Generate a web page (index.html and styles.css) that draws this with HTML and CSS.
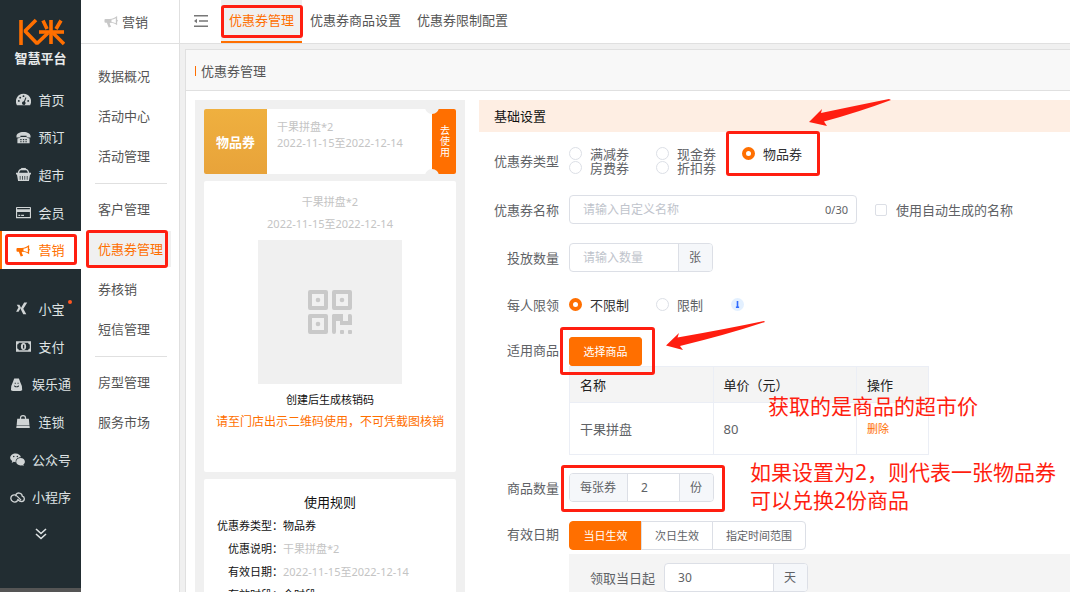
FILE: index.html
```html
<!DOCTYPE html>
<html lang="zh-CN">
<head>
<meta charset="utf-8">
<meta name="viewport" content="width=device-width, initial-scale=1">
<title>优惠券管理</title>
<link rel="stylesheet" href="styles.css">
</head>
<body>
<div class="app">
  <aside class="sidebar">
    <div class="brand">
      <svg class="brand-mark" viewBox="0 0 48 28" aria-hidden="true">
        <g fill="none" stroke="#ff6f00" stroke-width="3.600" stroke-linejoin="bevel">
          <path d="M4 2V27"/>
          <path d="M19 2L8 13L20 25.500L31 15"/>
          <path d="M22 14H47"/>
          <path d="M34 2V26"/>
          <path d="M26 2.500L30 11M44 2.500L39 11"/>
          <path d="M36 15L47 26"/>
        </g>
      </svg>
      <span class="brand-name">智慧平台</span>
    </div>
    <nav class="main-nav">
      <ul class="nav-group">
        <li><a class="nav-item" href="#"><svg class="icon" viewBox="0 0 16 16"><path fill="currentColor" fill-rule="evenodd" d="M8 2a8 8 0 0 0-7 12h14A8 8 0 0 0 8 2zM3 8.500a1 1 0 1 1 0 2 1 1 0 0 1 0-2zM4.500 5a1 1 0 1 1 0 2 1 1 0 0 1 0-2zM8 3.400a1 1 0 1 1 0 2 1 1 0 0 1 0-2zM13 8.500a1 1 0 1 1 0 2 1 1 0 0 1 0-2zM10.200 5.700l.9.400-1.600 4.300a1.900 1.900 0 1 1-1.100-.4z"/></svg>首页</a></li>
        <li><a class="nav-item" href="#"><svg class="icon" viewBox="0 0 16 16"><path fill="currentColor" fill-rule="evenodd" d="M8 2C3.500 2 .5 4 .5 6.500V8h4.200V6.200h6.600V8h4.200V6.500C15.500 4 12.500 2 8 2zM4.500 8.200L1.500 9v5h13V9l-3-.8V7.400h-7zM4.500 9.500h1.500V11H4.500zM7.300 9.500h1.500V11H7.300zM10 9.500h1.500V11H10zM4.500 12h1.500v1H4.500zM7.300 12h1.500v1H7.300zM10 12h1.500v1H10z"/></svg>预订</a></li>
        <li><a class="nav-item" href="#"><svg class="icon" viewBox="0 0 16 16"><path fill="none" stroke="currentColor" stroke-width="1.500" d="M2.500 7Q3 2.500 6 2.500h4Q13 2.500 13.500 7"/><path fill="currentColor" d="M5.500 1h5v2.500h-5z"/><path fill="currentColor" fill-rule="evenodd" d="M0 6h16v2h-1l-1.200 7H2.200L1 8H0zM4 9.500v4h.8v-4zM6.500 9.500v4h.8v-4zM9 9.500v4h.8v-4zM11.500 9.500v4h.8v-4z"/></svg>超市</a></li>
        <li><a class="nav-item" href="#"><svg class="icon" viewBox="0 0 16 16"><path fill="currentColor" fill-rule="evenodd" d="M0 3q0-1 1-1h14q1 0 1 1v11H0zM1.200 3.200v1.300h13.600V3.200zM1.200 7.500v5.300h13.600V7.500zM2.500 10.500h2v1.200h-2zM5.500 10.500h3v1.200h-3z"/></svg>会员</a></li>
        <li><a class="nav-item active" href="#"><svg class="icon" viewBox="0 0 16 16"><path fill="currentColor" fill-rule="evenodd" d="M14 2v10c-2-1.600-4-2.500-7-2.700l-1 .8 1.600 3.600-2.600.6L3 9.300H1.500Q.5 9.300.5 8V6.500Q.5 5.300 1.500 5.300H6C9.500 5 12 3.700 14 2zM12.600 4.500C11 5.500 9.500 6 8 6.200v2.200c1.700.2 3.200.7 4.600 1.500z"/><path fill="currentColor" d="M14 6q2 1 0 2z"/></svg>营销</a></li>
      </ul>
      <ul class="nav-group">
        <li><a class="nav-item" href="#"><svg class="icon" viewBox="0 0 16 16"><path fill="currentColor" d="M.8 4h2.800l1.700 3-2.600 4.500H.1L2.600 7zM8.700 1.500H12L7.800 8.200l3.200 6H7.700L4.800 8.200z"/></svg><span class="with-dot">小宝</span></a></li>
        <li><a class="nav-item" href="#"><svg class="icon" viewBox="0 0 16 16"><path fill="currentColor" fill-rule="evenodd" d="M0 2.500h16v11H0zM3 4Q3 5.500 1.300 5.800v4.400Q3 10.500 3 12h10q0-1.500 1.700-1.800V5.800Q13 5.500 13 4z"/><path fill="currentColor" fill-rule="evenodd" d="M8 4.300c2 0 2.800 1.700 2.800 3.700S10 11.700 8 11.700 5.200 10 5.200 8 6 4.300 8 4.300zM7.400 6v4h1.400V6z"/></svg>支付</a></li>
        <li><a class="nav-item" href="#"><svg class="icon" viewBox="0 0 16 16"><path fill="currentColor" fill-rule="evenodd" d="M4.500 1.500h5l1.500 4q2 3 2 8.500L11 15H3L1 14q0-5.500 2-8.500zM5 6v1.300h1.200V6zM8 6v1.300h1.200V6zM4.500 8.800q2.500 2.400 5 0v1.200q-2.500 2-5 0z"/></svg>娱乐通</a></li>
        <li><a class="nav-item" href="#"><svg class="icon" viewBox="0 0 16 16"><path fill="none" stroke="currentColor" stroke-width="1.300" d="M4.800 7V4.500Q4.800 1.700 7.500 1.700T10.200 4.500V7"/><path fill="currentColor" d="M1.300 5h12.400l.6 6.800H.7zM.6 12.300h13.800L14.700 15H.3z"/></svg>连锁</a></li>
        <li><a class="nav-item" href="#"><svg class="icon" viewBox="0 0 16 16"><path fill="currentColor" fill-rule="evenodd" d="M6 1.500c3 0 5.300 1.800 5.600 4.200-3.600 0-6 2.300-5.500 5.200L4 10.500 1.800 11.700l.6-2C1 8.800.2 7.500.2 6.200.2 3.500 2.800 1.500 6 1.500zM4 4a.8.8 0 1 0 0 1.600A.8.800 0 0 0 4 4zM7.800 4a.8.800 0 1 0 0 1.600.8.800 0 0 0 0-1.600z"/><path fill="currentColor" fill-rule="evenodd" d="M11.300 6.500c2.600 0 4.600 1.700 4.600 3.900 0 1.200-.7 2.300-1.700 3l.4 1.600-1.700-.9c-3.500.8-6.300-1-6.300-3.700 0-2.200 2.100-3.900 4.700-3.900z"/></svg>公众号</a></li>
        <li><a class="nav-item" href="#"><svg class="icon" viewBox="0 0 16 16"><path fill="none" stroke="currentColor" stroke-width="1.400" stroke-linecap="round" d="M8 11.500C6.500 13 4.500 13.200 3 12.300.6 11 .3 8 2 6.200 3.700 4.600 6.200 5 7.500 6.500L11.500 10.500M6 6C6.500 3.500 8.500 3 10 3.300c2 .4 3 1.800 3 3.200 1.400.3 2.300 1.400 2.300 2.800 0 1.800-1.300 3-3 3-1.800 0-2.800-.9-4-2.200"/></svg>小程序</a></li>
      </ul>
    </nav>
    <button class="more" type="button" aria-label="更多"><svg viewBox="0 0 12 12"><path fill="none" stroke="#dfe3e4" stroke-width="1.600" d="M1 1l5 4.500L11 1M1 6l5 4.500L11 6"/></svg></button>
    <div class="sidebar-foot"></div>
  </aside>

  <aside class="submenu">
    <header class="submenu-head"><svg class="icon" viewBox="0 0 16 16"><path fill="#c8c8c8" fill-rule="evenodd" d="M14 2v10c-2-1.600-4-2.500-7-2.700l-1 .8 1.600 3.600-2.600.6L3 9.300H1.500Q.5 9.300.5 8V6.500Q.5 5.300 1.500 5.300H6C9.500 5 12 3.700 14 2zM12.600 4.500C11 5.500 9.500 6 8 6.200v2.200c1.700.2 3.200.7 4.600 1.500z"/><path fill="#c8c8c8" d="M14 6q2 1 0 2z"/></svg>营销</header>
    <nav class="submenu-nav">
      <ul><li><a href="#">数据概况</a></li><li><a href="#">活动中心</a></li><li><a href="#">活动管理</a></li></ul>
      <ul><li><a href="#">客户管理</a></li><li><a class="active" href="#">优惠券管理</a></li><li><a href="#">券核销</a></li><li><a href="#">短信管理</a></li></ul>
      <ul><li><a href="#">房型管理</a></li><li><a href="#">服务市场</a></li></ul>
    </nav>
  </aside>

  <main class="main">
    <header class="topbar">
      <button class="fold" type="button" aria-label="收起菜单"><svg viewBox="0 0 14 14"><path fill="none" stroke="#777" stroke-width="1.400" d="M0 1.700h14M5 7h9M0 12.300h14"/><path fill="#777" d="M0 7l3-2.300v4.600z"/></svg></button>
      <nav class="tabs">
        <a class="tab active" href="#">优惠券管理</a>
        <a class="tab" href="#">优惠券商品设置</a>
        <a class="tab" href="#">优惠券限制配置</a>
      </nav>
    </header>

    <section class="panel">
      <h1 class="panel-title">优惠券管理</h1>
      <div class="panel-body">
        <div class="preview">
          <div class="coupon">
            <div class="coupon-kind">物品券</div>
            <div class="coupon-info">干果拼盘*2<br>2022-11-15至2022-12-14</div>
            <div class="coupon-use">去使用</div>
          </div>
          <div class="card code-card">
            <p class="muted">干果拼盘*2</p>
            <p class="muted">2022-11-15至2022-12-14</p>
            <div class="qr">
              <svg viewBox="0 0 44 44" aria-hidden="true">
                <g fill="none" stroke="#c9c9c9" stroke-width="4" stroke-linejoin="round">
                  <rect x="2" y="2" width="16" height="16"/><rect x="26" y="2" width="16" height="16"/><rect x="2" y="26" width="16" height="16"/>
                </g>
                <g fill="#c9c9c9">
                  <circle cx="10" cy="10" r="2.300"/><circle cx="34" cy="10" r="2.300"/><circle cx="10" cy="34" r="2.300"/>
                  <path d="M25 24h10v7h5v-6q0-1 2-1t2 2v9H32v-4h-4v11q0 2-2 2t-2-2V25z"/>
                  <rect x="32" y="40" width="4" height="4" rx="1"/><rect x="40" y="40" width="4" height="4" rx="1"/>
                </g>
              </svg>
            </div>
            <p class="caption">创建后生成核销码</p>
            <p class="warning">请至门店出示二维码使用，不可凭截图核销</p>
          </div>
          <div class="card rules-card">
            <h2>使用规则</h2>
            <dl>
              <div><dt>优惠券类型：</dt><dd class="dark">物品券</dd></div>
              <div><dt>优惠说明：</dt><dd>干果拼盘*2</dd></div>
              <div><dt>有效日期：</dt><dd>2022-11-15至2022-12-14</dd></div>
              <div><dt>有效时段：</dt><dd class="dark">全时段</dd></div>
            </dl>
          </div>
        </div>

        <form class="form">
          <h2 class="form-title">基础设置</h2>
          <div class="row" role="radiogroup" aria-labelledby="l-type">
            <span class="label" id="l-type">优惠券类型</span>
            <div class="radio-grid">
              <label><input type="radio" name="type">满减券</label>
              <label><input type="radio" name="type">现金券</label>
              <label class="selected"><input type="radio" name="type" checked>物品券</label>
              <label><input type="radio" name="type">房费券</label>
              <label><input type="radio" name="type">折扣券</label>
            </div>
          </div>
          <div class="row">
            <label class="label" for="name">优惠券名称</label>
            <div class="control">
              <div class="field name-field"><input id="name" type="text" placeholder="请输入自定义名称"><span class="count">0/30</span></div>
              <label class="check"><input type="checkbox">使用自动生成的名称</label>
            </div>
          </div>
          <div class="row">
            <label class="label" for="total">投放数量</label>
            <div class="control"><div class="field"><input class="w-total" id="total" type="text" placeholder="请输入数量"><span class="addon after">张</span></div></div>
          </div>
          <div class="row limit-row" role="radiogroup" aria-labelledby="l-limit">
            <span class="label" id="l-limit">每人限领</span>
            <div class="radio-grid">
              <label class="selected"><input type="radio" name="limit" checked>不限制</label>
              <label><input type="radio" name="limit">限制</label>
              <svg class="info" viewBox="0 0 13 13" aria-hidden="true"><circle cx="6.500" cy="6.500" r="6.500" fill="#e3f0ff"/><path fill="#2f6bff" d="M5.700 3h1.600v5.500h.8V10H4.900V8.500h.8z"/></svg>
            </div>
          </div>
          <div class="row goods-row">
            <span class="label">适用商品</span>
            <div class="stack">
              <button class="btn primary pick" type="button">选择商品</button>
              <table class="goods">
                <thead><tr><th>名称</th><th>单价（元）</th><th class="op">操作</th></tr></thead>
                <tbody><tr><td>干果拼盘</td><td>80</td><td><a class="delete" href="#">删除</a></td></tr></tbody>
              </table>
            </div>
          </div>
          <div class="row">
            <label class="label" for="qty">商品数量</label>
            <div class="control"><div class="field"><span class="addon before">每张券</span><input class="w-qty" id="qty" type="text" value="2"><span class="addon after">份</span></div></div>
          </div>
          <div class="row date-row">
            <span class="label">有效日期</span>
            <div class="stack">
              <div class="segmented"><button class="btn primary" type="button">当日生效</button><button class="btn" type="button">次日生效</button><button class="btn" type="button">指定时间范围</button></div>
              <div class="range"><label for="days">领取当日起</label><div class="field"><input class="w-total" id="days" type="text" value="30"><span class="addon after">天</span></div></div>
            </div>
          </div>
        </form>
      </div>
    </section>
  </main>

  <div class="notes">
    <div class="mark mark-nav"></div>
    <div class="mark mark-menu"></div>
    <div class="mark mark-tab"></div>
    <div class="mark mark-type"></div>
    <div class="mark mark-pick"></div>
    <div class="mark mark-qty"></div>
    <svg class="arrow arrow-type" viewBox="0 0 82 28"><path fill="#ff1e10" d="M0 23L13 10L12 14Q50 6 80 0L82 1Q50 13 15 22.500L18 27z"/></svg>
    <svg class="arrow arrow-pick" viewBox="0 0 99 30"><path fill="#ff1e10" d="M0 24.500L13 12L11.500 16.500Q60 8 98 0L99 1Q60 14 14 25L17 29z"/></svg>
    <p class="note note-price">获取的是商品的超市价</p>
    <p class="note note-qty">如果设置为2，则代表一张物品券<br>可以兑换2份商品</p>
  </div>
</div>
</body>
</html>
```
FILE: styles.css
```css
* { box-sizing: border-box; }
body {
  margin: 0;
  font: 13px/20px "Noto Sans", "Noto Sans CJK SC", sans-serif;
  color: #606266;
}
ul, dl, dd, p, h1, h2 { margin: 0; padding: 0; list-style: none; }
h1, h2 { font-weight: 400; font-size: 13px; }
a { color: inherit; text-decoration: none; }
button, input { font: inherit; color: inherit; }
button { cursor: pointer; }

.app { position: relative; display: flex; height: 100vh; overflow: hidden; background: #f0f0f0; }

/* Dark sidebar */
.sidebar { display: flex; flex-direction: column; flex: none; width: 81px; background: #222d32; color: #dfe3e4; }
.brand { display: flex; flex-direction: column; align-items: center; flex: none; height: 81px; padding-top: 18px; }
.brand-mark { width: 48px; height: 28px; }
.brand-name { margin-top: 2px; font-weight: 700; color: #e8eaeb; }
.main-nav { display: flex; flex-direction: column; gap: 21px; flex: none; }
.nav-group { display: flex; flex-direction: column; }
.nav-group:first-child { height: 188px; }
.nav-group:last-child { height: 226px; }
.nav-group li { display: flex; flex: 1; }
.nav-item { display: flex; flex: 1; align-items: center; justify-content: center; gap: 7px; }
.nav-item.active { background: #fff; color: #ff6f00; box-shadow: inset 2px 0 #ff6f00; }
.icon { flex: none; width: 15px; height: 15px; }
.nav-item .icon { color: #d0d4d5; }
.nav-item.active .icon { color: #ff6f00; }
.with-dot { position: relative; }
.with-dot::after { content: ""; position: absolute; top: 1px; right: -7px; width: 4px; height: 4px; border-radius: 50%; background: #ff5722; }
.more { display: flex; align-items: center; justify-content: center; flex: none; height: 36px; border: 0; background: none; }
.more svg { width: 12px; height: 12px; }
.sidebar-foot { height: 4px; margin-top: auto; background: #555; }

/* Second-level menu */
.submenu { flex: none; width: 99px; background: #fff; border-right: 1px solid #e0e0e0; color: #555; }
.submenu-head { display: flex; align-items: center; justify-content: center; gap: 3px; height: 44px; padding-right: 8px; border-bottom: 1px solid #e0e0e0; }
.submenu-nav { padding-top: 12px; }
.submenu-nav li { display: flex; align-items: center; height: 40px; padding: 0 8px; }
.submenu-nav a { flex: 1; padding: 0 0 0 9px; line-height: 36px; white-space: nowrap; }
.submenu-nav .active { background: #f0f0f0; color: #ff6f00; }
.submenu-nav ul + ul::before { content: ""; display: block; height: 1px; margin: 7px 12px 5px 14px; background: #e0e0e0; }

/* Page frame */
.main { display: flex; flex-direction: column; flex: 1; min-width: 0; }
.topbar { display: flex; flex: none; height: 44px; background: #fff; border-bottom: 1px solid #e0e0e0; }
.fold { display: flex; align-items: center; width: 41px; padding: 0 0 2px 14px; border: 0; background: none; }
.fold svg { width: 14px; height: 14px; }
.tabs { display: flex; color: #555; }
.tab { padding: 0 8px; line-height: 41px; }
.tab.active { background: #f0f0f0; color: #ff6f00; border-bottom: 2px solid #ff6f00; }
.panel { display: flex; flex-direction: column; flex: 1; min-height: 0; margin: 5px 0 0 5px; border: 1px solid #e0e0e0; border-width: 1px 0 0 1px; background: #fff; }
.panel-title { display: flex; align-items: center; gap: 5px; flex: none; height: 41px; padding-left: 9px; padding-top: 2px; background: #f8f8f8; border-bottom: 1px solid #e0e0e0; color: #555; }
.panel-title::before { content: ""; width: 1px; height: 10px; background: #ff6f00; }
.panel-body { display: flex; gap: 14px; flex: 1; min-height: 0; padding: 9px 0 0 9px; }

/* Coupon preview */
.preview { display: flex; flex-direction: column; gap: 7px; flex: none; width: 270px; padding: 9px; background: #f0f0f0; font-size: 11px; line-height: 16px; overflow: hidden; }
.coupon { position: relative; display: flex; flex: none; height: 65px; border-radius: 2px; overflow: hidden; background: #fff; }
.coupon::before, .coupon::after { content: ""; position: absolute; right: 17px; width: 14px; height: 14px; border-radius: 50%; background: #f0f0f0; }
.coupon::before { top: -9px; }
.coupon::after { bottom: -9px; }
.coupon-kind { display: flex; align-items: center; justify-content: center; width: 63px; background: linear-gradient(#efb03f, #e8a33a); color: #fff; font-size: 13px; font-weight: 700; }
.coupon-info { flex: 1; padding: 10px; color: #c4c4c4; white-space: nowrap; }
.coupon-use { display: flex; align-items: center; width: 24px; padding: 0 6px 0 8px; background: #ff6f00; color: #fff; font-size: 10px; line-height: 11px; }
.card { flex: none; background: #fff; text-align: center; color: #111; border-radius: 2px; }
.code-card { height: 291px; padding-top: 10px; }
.muted { line-height: 22px; color: #c4c4c4; }
.qr { display: flex; align-items: center; justify-content: center; width: 144px; height: 144px; margin: 5px auto; background: #f0f0f0; }
.qr svg { width: 44px; height: 44px; }
.caption { line-height: 22px; }
.warning { font-size: 12px; line-height: 22px; color: #ff6f00; white-space: nowrap; }
.rules-card { padding: 12px 0; }
.rules-card h2 { line-height: 23px; }
.rules-card dl > div { display: flex; line-height: 23px; text-align: left; }
.rules-card dt { width: 79px; text-align: right; white-space: nowrap; }
.rules-card dd { color: #c4c4c4; }
.rules-card .dark { color: #111; }

/* Settings form */
.form { display: flex; flex-direction: column; flex: 1; min-width: 0; }
.form-title { flex: none; padding: 0 15px; margin-bottom: 14px; line-height: 32px; background: #feeee3; color: #111; }
.row { display: flex; align-items: center; gap: 10px; flex: none; min-height: 29px; margin-bottom: 19px; }
.form-title + .row { margin-bottom: 20px; }
.label { flex: none; width: 80px; text-align: right; }
.control { display: flex; align-items: center; gap: 18px; flex: 1; }
.radio-grid { display: grid; grid-template-columns: 87px 86px auto; line-height: 14px; }
.radio-grid label, .check { display: flex; align-items: center; gap: 8px; white-space: nowrap; }
.radio-grid .selected { color: #303133; }
input[type="radio"], input[type="checkbox"] { appearance: none; flex: none; width: 13px; height: 13px; margin: 0; border: 1px solid #dcdfe6; border-radius: 50%; background: #fff; }
input[type="radio"]:checked { border: 4px solid #ff6f00; }
input[type="checkbox"] { width: 12px; height: 12px; border-radius: 2px; }
.check { gap: 9px; }
.limit-row { min-height: 27px; }
.limit-row .radio-grid { align-items: center; grid-template-columns: 87px 75px auto; }
.info { width: 13px; height: 13px; }
.field { display: flex; height: 29px; border: 1px solid #dcdfe6; border-radius: 4px; background: #fff; overflow: hidden; font-size: 12px; line-height: 27px; }
.field input { min-width: 0; padding: 0 13px; border: 0; outline: 0; background: none; }
.field input::placeholder { color: #c0c4cc; }
.name-field { flex: 0 1 288px; }
.name-field input { flex: 1; }
.count { padding-right: 8px; font-size: 11px; }
.w-total { width: 108px; }
.w-qty { width: 51px; }
.addon { padding: 0 11px 0 10px; background: #f5f7fa; }
.before { border-right: 1px solid #dcdfe6; }
.after { border-left: 1px solid #dcdfe6; }
.stack { flex: 1; min-width: 0; }
.goods-row, .date-row { align-items: flex-start; }
.goods-row { margin-bottom: 18px; }
.goods-row .label, .date-row .label { line-height: 26px; }
.btn { height: 29px; padding: 0 13px; border: 1px solid #dcdfe6; background: #fff; font-size: 11px; line-height: 27px; }
.btn.primary { min-width: 73px; background: #ff6f00; border-color: #ff6f00; color: #fff; }
.pick { display: block; border-radius: 3px; }
.goods { width: 360px; table-layout: fixed; border-collapse: collapse; text-align: left; }
.goods th, .goods td { padding: 0 10px; border: 1px solid #ebeef5; }
.goods th { height: 36px; background: #f4f4f4; color: #222; font-weight: 400; }
.goods td { height: 52px; }
.goods .op { width: 72px; }
.delete { color: #ff6f00; font-size: 11px; }
.segmented { display: flex; }
.segmented .btn + .btn { margin-left: -1px; }
.segmented .btn:first-child { border-radius: 4px 0 0 4px; }
.segmented .btn:last-child { border-radius: 0 4px 4px 0; }
.range { display: flex; align-items: center; gap: 9px; margin-top: 4px; padding: 9px 21px; background: #f4f4f4; }

/* Red callouts drawn over the page */
.notes { position: absolute; inset: 0; pointer-events: none; color: #ff1e10; }
.mark { position: absolute; border: 3px solid #ff1e10; border-radius: 3px; }
.mark-nav { left: 5px; top: 234px; width: 72px; height: 31px; }
.mark-menu { left: 86px; top: 230px; width: 82px; height: 38px; }
.mark-tab { left: 221px; top: 5px; width: 82px; height: 33px; }
.mark-type { left: 726px; top: 131px; width: 94px; height: 45px; }
.mark-pick { left: 560px; top: 327px; width: 95px; height: 48px; }
.mark-qty { left: 561px; top: 465px; width: 164px; height: 47px; }
.arrow { position: absolute; }
.arrow-type { left: 809px; top: 99px; width: 82px; height: 28px; }
.arrow-pick { left: 666px; top: 321px; width: 99px; height: 30px; }
.note { position: absolute; font-size: 21px; line-height: 28px; white-space: nowrap; }
.note-price { left: 768px; top: 392px; }
.note-qty { left: 750px; top: 458px; }
```
